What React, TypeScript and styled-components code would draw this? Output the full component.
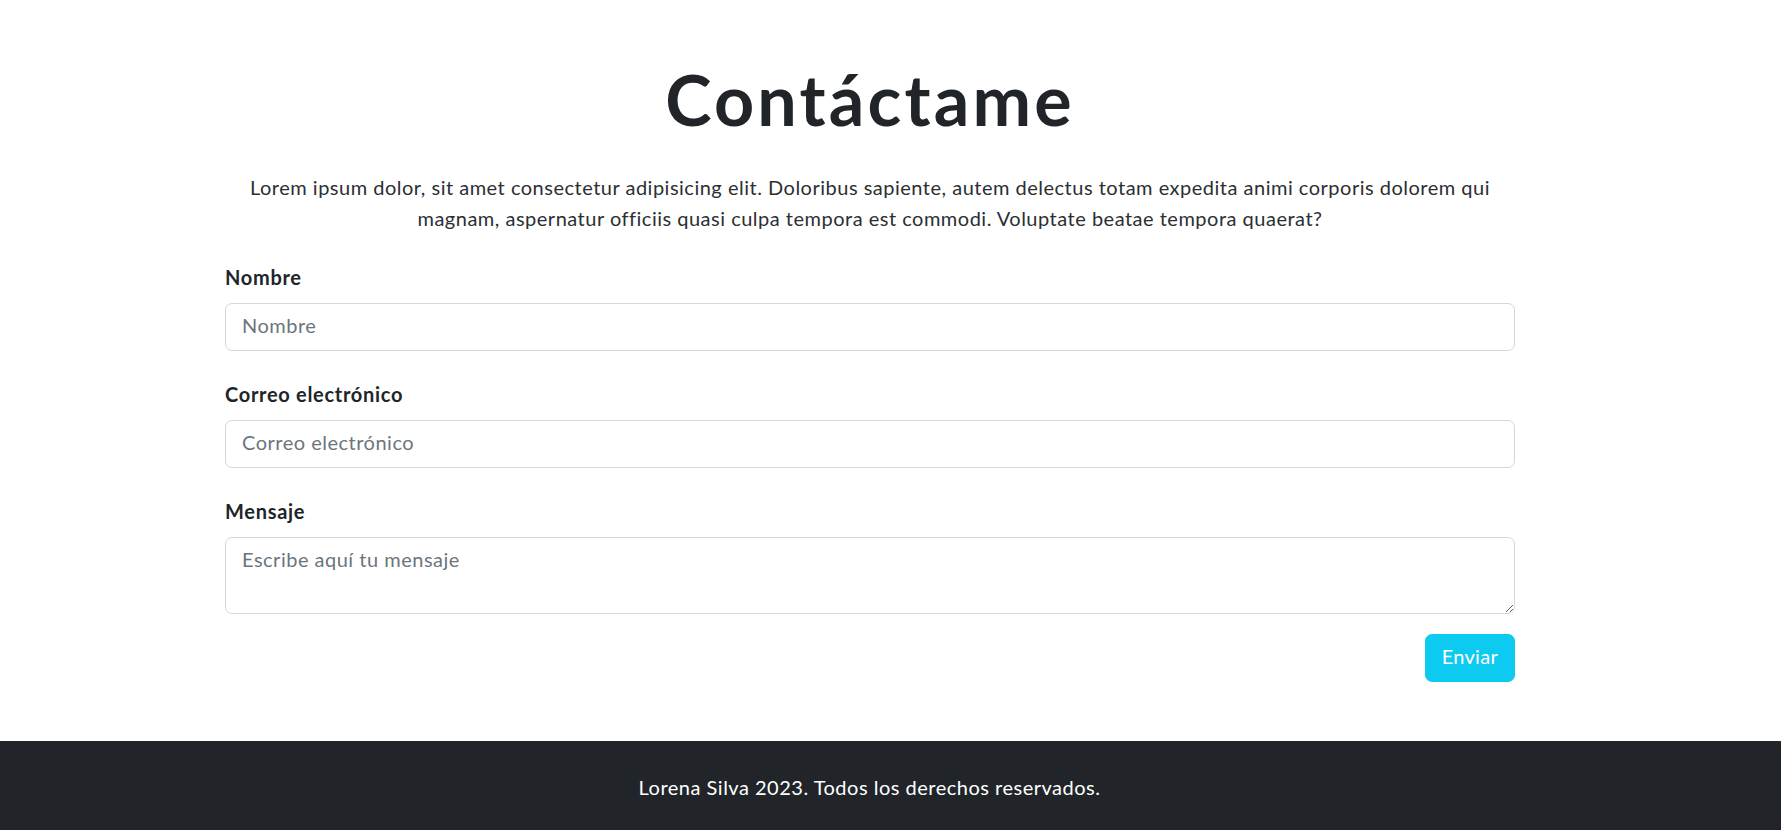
import React from "react";
import styled, { createGlobalStyle } from "styled-components";

const GlobalStyle = createGlobalStyle`
  html, body {
    margin: 0;
    padding: 0;
    background: #ffffff;
  }
  body {
    font-family: "Lato", "Liberation Sans", sans-serif;
    color: #212529;
  }
  * { box-sizing: border-box; }
`;

const Page = styled.div`
  display: flex;
  flex-direction: column;
  width: 1781px;
`;

const Main = styled.main`
  display: flex;
  flex-direction: column;
  padding-top: 57px;
  padding-bottom: 59px;
`;

const Column = styled.div`
  display: flex;
  flex-direction: column;
  width: 1290px;
  margin-left: 225px;
`;

const Title = styled.h1`
  margin: 0;
  text-align: center;
  font-size: 70px;
  line-height: 1.2;
  font-weight: 700;
  letter-spacing: 3.2px;
  color: #212529;
`;

const Lead = styled.p`
  margin: 31px 0 28px;
  text-align: center;
  font-size: 20px;
  line-height: 31px;
  font-weight: 400;
  letter-spacing: 0.5px;
  color: #2b2f33;
`;

const Form = styled.form`
  display: flex;
  flex-direction: column;
`;

const Field = styled.div<{ $last?: boolean }>`
  display: flex;
  flex-direction: column;
  margin-bottom: ${(p) => (p.$last ? "20px" : "28px")};
`;

const Label = styled.label`
  font-size: 20px;
  line-height: 30px;
  font-weight: 700;
  letter-spacing: 0.7px;
  color: #212529;
  margin-bottom: 11px;
`;

const controlStyles = `
  width: 100%;
  font-family: "Lato", "Liberation Sans", sans-serif;
  font-size: 20px;
  line-height: 30px;
  letter-spacing: 0.5px;
  color: #212529;
  background: #ffffff;
  border: 1px solid #d3d7db;
  border-radius: 7px;
  padding: 6px 16px 10px;
  outline: none;
  &::placeholder {
    color: #6c757d;
    opacity: 1;
  }
`;

const Input = styled.input`
  ${controlStyles}
  height: 48px;
`;

const TextArea = styled.textarea`
  ${controlStyles}
  height: 77px;
  resize: vertical;
  display: block;
`;

const Actions = styled.div`
  display: flex;
  justify-content: flex-end;
`;

const SubmitButton = styled.button`
  height: 48px;
  min-width: 89px;
  padding: 6px 16px 10px;
  font-family: "Lato", "Liberation Sans", sans-serif;
  font-size: 20px;
  line-height: 30px;
  letter-spacing: 0.3px;
  color: #ffffff;
  background: #0dcaf0;
  border: 1px solid #0dcaf0;
  border-radius: 7px;
  cursor: pointer;
`;

const Footer = styled.footer`
  background: #212529;
  padding: 31px 42px 33px 0;
  text-align: center;
  color: #ffffff;
  font-size: 20px;
  line-height: 30px;
  letter-spacing: 0.5px;
`;

export default function App() {
  return (
    <Page>
      <GlobalStyle />
      <Main>
        <Column>
          <Title>Contáctame</Title>
          <Lead>
            Lorem ipsum dolor, sit amet consectetur adipisicing elit. Doloribus sapiente, autem
            delectus totam expedita animi corporis dolorem qui magnam, aspernatur officiis quasi
            culpa tempora est commodi. Voluptate beatae tempora quaerat?
          </Lead>
          <Form onSubmit={(e) => e.preventDefault()}>
            <Field>
              <Label htmlFor="nombre">Nombre</Label>
              <Input id="nombre" type="text" placeholder="Nombre" />
            </Field>
            <Field>
              <Label htmlFor="correo">Correo electrónico</Label>
              <Input id="correo" type="email" placeholder="Correo electrónico" />
            </Field>
            <Field $last>
              <Label htmlFor="mensaje">Mensaje</Label>
              <TextArea id="mensaje" rows={2} placeholder="Escribe aquí tu mensaje" />
            </Field>
            <Actions>
              <SubmitButton type="submit">Enviar</SubmitButton>
            </Actions>
          </Form>
        </Column>
      </Main>
      <Footer>Lorena Silva 2023. Todos los derechos reservados.</Footer>
    </Page>
  );
}
